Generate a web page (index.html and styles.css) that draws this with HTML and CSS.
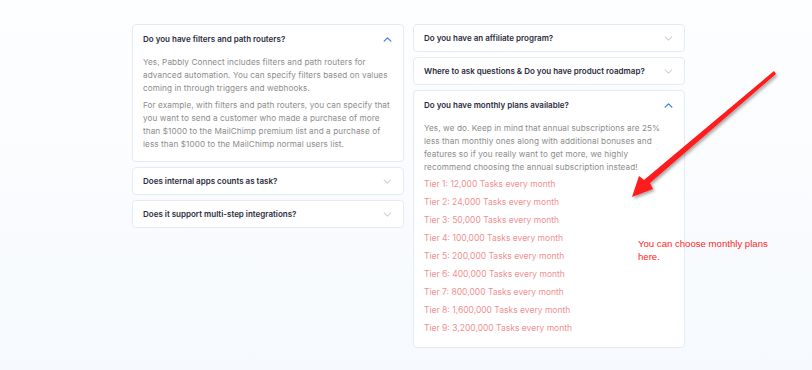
FILE: index.html
```html
<!DOCTYPE html>
<html>
<head>
<meta charset="utf-8">
<link rel="stylesheet" href="styles.css">
</head>
<body>
<div class="page">
  <div class="faq">
    <div class="col">
      <div class="card open">
        <div class="head"><span>Do you have filters and path routers?</span><svg class="chev up" viewBox="0 0 10 6"><path d="M1 5 L5 1 L9 5"/></svg></div>
        <div class="body">
          <p>Yes, Pabbly Connect includes filters and path routers for advanced automation. You can specify filters based on values coming in through triggers and webhooks.</p>
          <p>For example, with filters and path routers, you can specify that you want to send a customer who made a purchase of more than $1000 to the MailChimp premium list and a purchase of less than $1000 to the MailChimp normal users list.</p>
        </div>
      </div>
      <div class="card">
        <div class="head"><span>Does internal apps counts as task?</span><svg class="chev" viewBox="0 0 10 6"><path d="M1 1 L5 5 L9 1"/></svg></div>
      </div>
      <div class="card">
        <div class="head"><span>Does it support multi-step integrations?</span><svg class="chev" viewBox="0 0 10 6"><path d="M1 1 L5 5 L9 1"/></svg></div>
      </div>
    </div>
    <div class="col">
      <div class="card">
        <div class="head"><span>Do you have an affiliate program?</span><svg class="chev" viewBox="0 0 10 6"><path d="M1 1 L5 5 L9 1"/></svg></div>
      </div>
      <div class="card">
        <div class="head"><span>Where to ask questions &amp; Do you have product roadmap?</span><svg class="chev" viewBox="0 0 10 6"><path d="M1 1 L5 5 L9 1"/></svg></div>
      </div>
      <div class="card open tiers">
        <div class="head"><span>Do you have monthly plans available?</span><svg class="chev up" viewBox="0 0 10 6"><path d="M1 5 L5 1 L9 5"/></svg></div>
        <div class="body">
          <p>Yes, we do. Keep in mind that annual subscriptions are 25% less than monthly ones along with additional bonuses and features so if you really want to get more, we highly recommend choosing the annual subscription instead!</p>
          <p class="tier">Tier 1: 12,000 Tasks every month</p>
          <p class="tier">Tier 2: 24,000 Tasks every month</p>
          <p class="tier">Tier 3: 50,000 Tasks every month</p>
          <p class="tier">Tier 4: 100,000 Tasks every month</p>
          <p class="tier">Tier 5: 200,000 Tasks every month</p>
          <p class="tier">Tier 6: 400,000 Tasks every month</p>
          <p class="tier">Tier 7: 800,000 Tasks every month</p>
          <p class="tier">Tier 8: 1,600,000 Tasks every month</p>
          <p class="tier">Tier 9: 3,200,000 Tasks every month</p>
        </div>
      </div>
    </div>
  </div>
  <svg class="arrow" viewBox="0 0 812 370" width="812" height="370">
    <defs>
      <filter id="sh" x="-20%" y="-20%" width="140%" height="140%">
        <feDropShadow dx="1.5" dy="2" stdDeviation="1.5" flood-color="#000" flood-opacity="0.35"/>
      </filter>
    </defs>
    <polygon filter="url(#sh)" fill="#ff1a1a" points="774,71 776,74 650,183 653,189 632,197 639,176 644,180"/>
  </svg>
  <div class="note">You can choose monthly plans<br>here.</div>
</div>
</body>
</html>
```
FILE: styles.css
```css
html, body {
  margin: 0;
  padding: 0;
}
body {
  width: 812px;
  height: 370px;
  overflow: hidden;
  background: linear-gradient(180deg, #fdfeff 0%, #f6f9fd 100%);
  font-family: Inter, "Noto Sans", sans-serif;
}
.page {
  position: relative;
  width: 812px;
  height: 370px;
}
.faq {
  display: flex;
  gap: 9px;
  padding: 24px 0 0 132px;
}
.col {
  width: 272px;
  display: flex;
  flex-direction: column;
  gap: 5px;
}
.card {
  background: #fff;
  border: 1px solid #e5ebf5;
  border-radius: 4px;
  box-sizing: border-box;
}
.head {
  height: 26px;
  display: flex;
  align-items: center;
  justify-content: space-between;
  padding: 0 11px 0 10px;
  font-size: 8px;
  font-weight: 600;
  color: #2a2c3e;
}
.open .head {
  height: 28px;
}
.chev {
  width: 9px;
  height: 5px;
  fill: none;
  stroke: #cfd2d8;
  stroke-width: 1.3;
  stroke-linecap: round;
  stroke-linejoin: round;
}
.chev.up {
  stroke: #3d7ff0;
  stroke-width: 1.5;
}
.body {
  padding: 3px 10px 10px 10px;
  font-size: 8.2px;
  letter-spacing: 0.08px;
  line-height: 13px;
  color: #8c8c8c;
}
.body p {
  margin: 0 0 4px 0;
}
.body p:last-child {
  margin-bottom: 0;
}
.body p.tier {
  color: #ef9090;
  font-size: 8.5px;
  letter-spacing: 0;
  margin-bottom: 5px;
}
.body p.tier:last-child {
  margin-bottom: 0;
}
.tiers .body {
  padding-bottom: 12px;
}
.arrow {
  position: absolute;
  left: 0;
  top: 0;
  pointer-events: none;
}
.note {
  position: absolute;
  left: 638px;
  top: 237px;
  font-family: "Liberation Sans", Arial, sans-serif;
  font-size: 9.6px;
  line-height: 13px;
  color: #ff1f1f;
}
```
